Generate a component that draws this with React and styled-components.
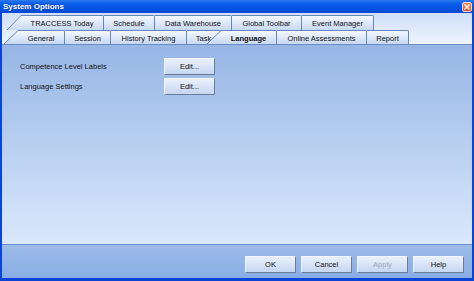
import React from "react";
import styled, { createGlobalStyle } from "styled-components";

const Global = createGlobalStyle`
  html, body { margin: 0; padding: 0; background: #fff; }
  body { font-family: "Liberation Sans", Arial, sans-serif; }
`;

const Window = styled.div`
  width: 474px;
  height: 281px;
  box-sizing: border-box;
  display: flex;
  flex-direction: column;
  background: #0b45d6;
`;

const TitleBar = styled.div`
  height: 13px;
  flex: none;
  display: flex;
  align-items: center;
  justify-content: space-between;
  padding: 0 2px 0 3px;
  background: linear-gradient(#2b7bf0 0%, #0a5ce8 30%, #0452e0 70%, #0348d2 100%);
  color: #fff;
  font-weight: bold;
  font-size: 8px;
  text-shadow: 0 0 1px #0a2e8a;
`;

const CloseBtn = styled.div`
  width: 10px;
  height: 10px;
  box-sizing: border-box;
  border: 1px solid #f6d6c8;
  border-radius: 2px;
  background: linear-gradient(#f08a62, #d9532b);
  display: flex;
  align-items: center;
  justify-content: center;
`;

const Frame = styled.div`
  flex: 1;
  display: flex;
  flex-direction: column;
  margin: 0 2px 3px 2px;
  background: #dbe7fa;
`;

const TabStrip = styled.div`
  height: 31px;
  flex: none;
  box-sizing: border-box;
  padding-top: 2px;
  display: flex;
  flex-direction: column;
  background: linear-gradient(#cfdff7, #eef4fd);
`;

const TabRow = styled.div`
  display: flex;
  height: ${(p) => p.$h}px;
  padding-left: ${(p) => p.$indent}px;
`;

const TabBox = styled.div`
  position: relative;
  z-index: ${(p) => (p.$active ? 2 : 1)};
  display: flex;
  width: ${(p) => p.$w}px;
  margin-left: ${(p) => (p.$overlap ? -14 : 0)}px;
  flex: none;
`;

const TabBody = styled.div`
  flex: 1;
  box-sizing: border-box;
  display: flex;
  align-items: center;
  justify-content: center;
  border-top: 1px solid #6786bb;
  border-right: 1px solid #6786bb;
  border-top-right-radius: 2px;
  background: linear-gradient(#f4f8fe, #c7d8f2);
  font-size: 7.5px;
  font-weight: ${(p) => (p.$active ? "bold" : "normal")};
  color: #111;
  white-space: nowrap;
  padding-top: 1px;
`;

const Wedge = styled.svg`
  flex: none;
  display: block;
`;

const Panel = styled.div`
  flex: 1;
  box-sizing: border-box;
  border-top: 1px solid #6d8cc2;
  border-bottom: 1px solid #6a8dcb;
  background: linear-gradient(#96b6e5, #dae8fc);
  padding: 13px 0 0 18px;
  display: grid;
  grid-template-columns: 144px 51px;
  grid-auto-rows: 17px;
  row-gap: 3px;
  align-content: start;
  align-items: center;
`;

const Label = styled.div`
  font-size: 7.5px;
  color: #111;
`;

const Button = styled.div`
  width: 51px;
  height: 17px;
  box-sizing: border-box;
  display: flex;
  align-items: center;
  justify-content: center;
  border: 1px solid;
  border-color: #f2f6fd #6d7c96 #6d7c96 #f2f6fd;
  background: linear-gradient(#e9f0fb, #c6d7f1);
  font-size: 7.5px;
  color: ${(p) => (p.$disabled ? "#9aa6b8" : "#111")};
`;

const ButtonBar = styled.div`
  height: 33px;
  flex: none;
  box-sizing: border-box;
  display: flex;
  justify-content: flex-end;
  gap: 5px;
  padding: 11px 8px 0 0;
  background: linear-gradient(#9cbbe8, #89aee5);
`;

let gid = 0;
function Tab({ label, w, slant, active, overlap, h }) {
  const id = React.useMemo(() => `tg${gid++}`, []);
  return (
    <TabBox $w={w} $active={active} $overlap={overlap}>
      {slant && (
        <Wedge width="14" height={h} viewBox={`0 0 14 ${h}`}>
          <defs>
            <linearGradient id={id} x1="0" y1="0" x2="0" y2="1">
              <stop offset="0" stopColor="#f4f8fe" />
              <stop offset="1" stopColor="#c7d8f2" />
            </linearGradient>
          </defs>
          <polygon points={`0,${h} 14,0.5 14,${h}`} fill={`url(#${id})`} />
          <line x1="0" y1={h} x2="14" y2="0.5" stroke="#6786bb" strokeWidth="1" />
        </Wedge>
      )}
      <TabBody $active={active}>{label}</TabBody>
    </TabBox>
  );
}

const row1 = [
  { label: "TRACCESS Today", w: 97, slant: true },
  { label: "Schedule", w: 51 },
  { label: "Data Warehouse", w: 77 },
  { label: "Global Toolbar", w: 70 },
  { label: "Event Manager", w: 72 },
];

const row2 = [
  { label: "General", w: 61, slant: true },
  { label: "Session", w: 46 },
  { label: "History Tracking", w: 76 },
  { label: "Task", w: 34 },
  { label: "Language", w: 70, slant: true, active: true, overlap: true },
  { label: "Online Assessments", w: 90 },
  { label: "Report", w: 42 },
];

export default function App() {
  return (
    <>
      <Global />
      <Window>
        <TitleBar>
          <span>System Options</span>
          <CloseBtn>
            <svg width="6" height="6" viewBox="0 0 6 6">
              <path d="M0.5 0.5 L5.5 5.5 M5.5 0.5 L0.5 5.5" stroke="#fff" strokeWidth="1.4" />
            </svg>
          </CloseBtn>
        </TitleBar>
        <Frame>
          <TabStrip>
            <TabRow $h={15} $indent={5}>
              {row1.map((t) => (
                <Tab key={t.label} {...t} h={15} />
              ))}
            </TabRow>
            <TabRow $h={14} $indent={2}>
              {row2.map((t) => (
                <Tab key={t.label} {...t} h={14} />
              ))}
            </TabRow>
          </TabStrip>
          <Panel>
            <Label>Competence Level Labels</Label>
            <Button>Edit...</Button>
            <Label>Language Settings</Label>
            <Button>Edit...</Button>
          </Panel>
          <ButtonBar>
            <Button>OK</Button>
            <Button>Cancel</Button>
            <Button $disabled>Apply</Button>
            <Button>Help</Button>
          </ButtonBar>
        </Frame>
      </Window>
    </>
  );
}
